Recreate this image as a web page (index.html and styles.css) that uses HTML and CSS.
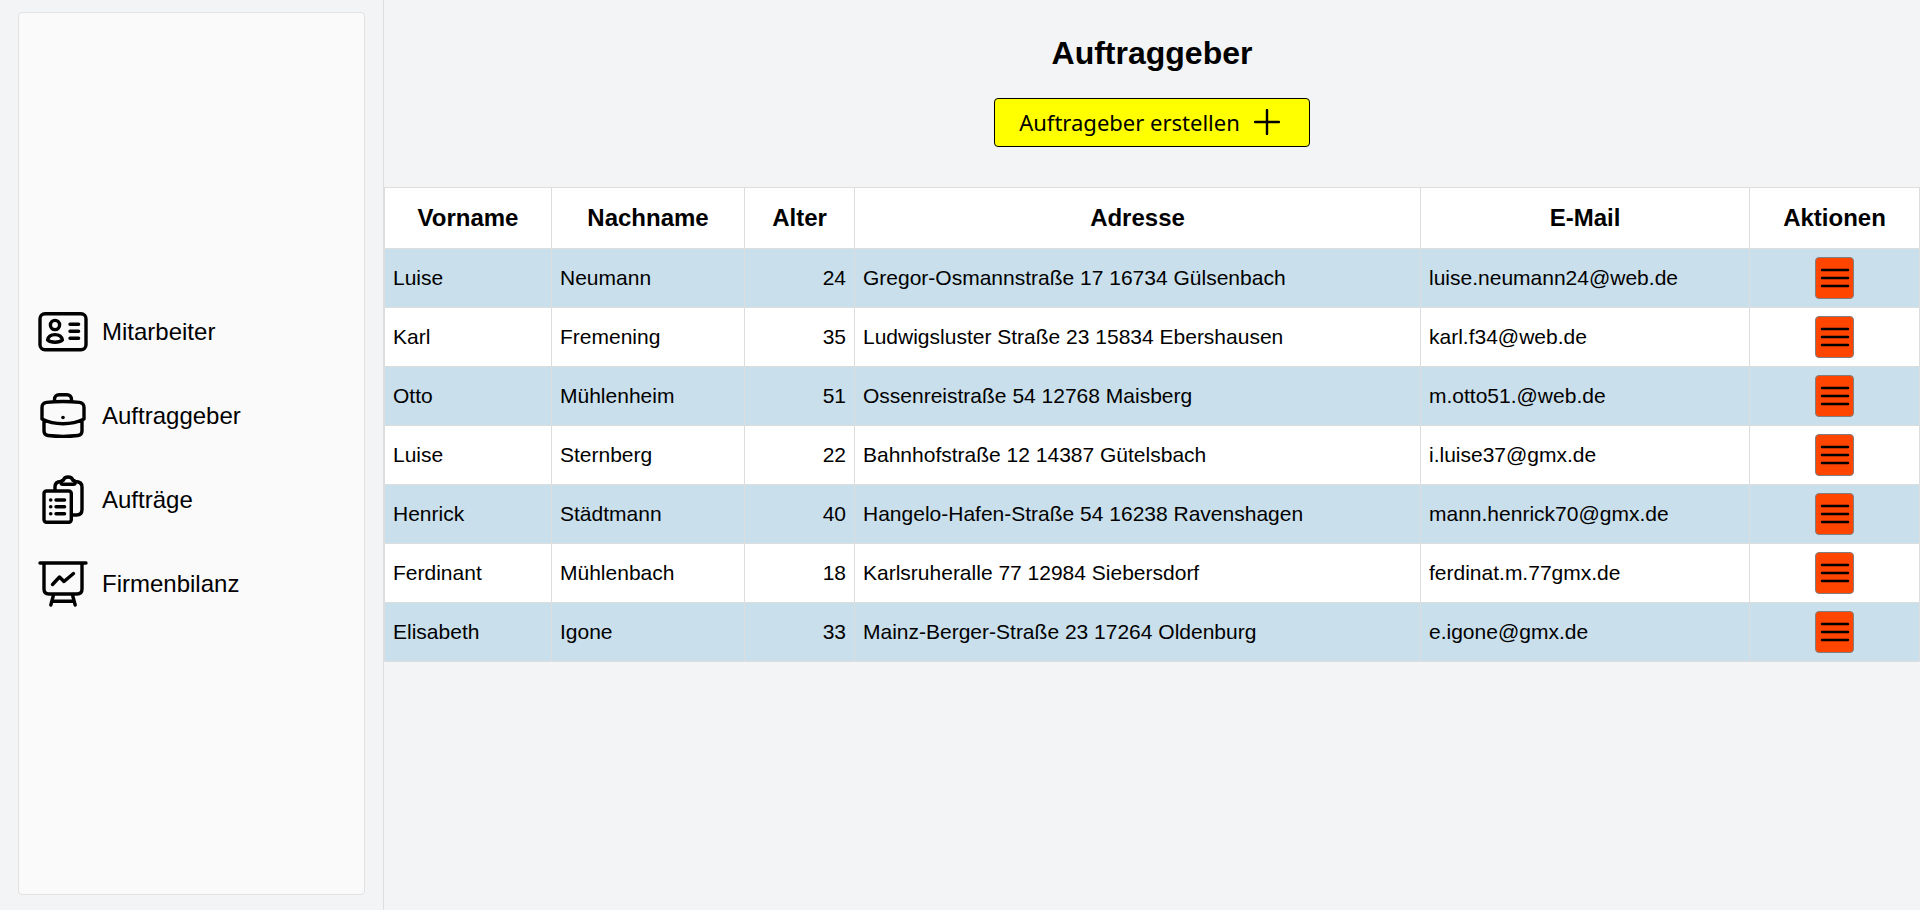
FILE: index.html
```html
<!DOCTYPE html>
<html lang="de">
<head>
<meta charset="utf-8">
<title>Auftraggeber</title>
<link rel="stylesheet" href="styles.css">
</head>
<body>
<svg width="0" height="0" class="sprite" aria-hidden="true">
  <symbol id="menu" viewBox="0 0 30 30"><path d="M2 7h26M2 15h26M2 23h26"/></symbol>
</svg>
<div class="layout">
  <aside class="sidebar">
    <nav class="panel">
      <a class="nav-link" href="#">
        <svg class="nav-icon" viewBox="0 0 50 50"><rect x="2" y="6.700" width="46" height="36" rx="5"/><circle cx="17" cy="18" r="4.600"/><path d="M9.600 33c.6-3.400 3.400-5.400 7.400-5.400s6.800 2 7.400 5.400c-1.700 1.500-4.300 2.200-7.400 2.200s-5.700-.7-7.400-2.200zM32 17.200h8.600M32 24.200h8.600M32 31.200h8.600"/></svg>
        <span>Mitarbeiter</span>
      </a>
      <a class="nav-link" href="#">
        <svg class="nav-icon" viewBox="0 0 50 50"><path d="M16.500 10.500V8.500c0-3 2-4.800 4.500-4.800h8c2.500 0 4.500 1.800 4.500 4.800v2M4 28V16.500c0-3 1.500-4.600 4.500-5.100 11-1.300 22-1.300 33 0 3 .5 4.500 2.100 4.500 5.100V28c-6 3-13 4.700-21 4.700S10 31 4 28zM6 29v11c0 2.800 1.300 4.200 4 4.500 10 1.100 20 1.100 30 0 2.700-.3 4-1.700 4-4.500V29"/><circle class="dot" cx="25" cy="26.500" r="1.800"/></svg>
        <span>Auftraggeber</span>
      </a>
      <a class="nav-link" href="#">
        <svg class="nav-icon" viewBox="0 0 50 50"><rect x="6" y="16" width="27.300" height="31.300" rx="2.500"/><path d="M17 15.500V12c0-3.500 2-5.500 6-5.500M37 6.500c5 0 7 2 7 5.500v22.500c0 3.500-2 5.500-5.500 5.500H34M25 9.200c-1.500 0-2-.8-2-1.800 0-1.200.8-1.900 2.200-2.100.8-2.200 2.400-3.300 4.900-3.300s4.100 1.100 4.900 3.300c1.400.2 2.200.9 2.200 2.100 0 1-.5 1.800-2 1.800zM18 25h8.600M18 31.700h8.600M18 38.700h8.600"/><circle class="dot" cx="12.700" cy="25" r="1.800"/><circle class="dot" cx="12.700" cy="31.700" r="1.800"/><circle class="dot" cx="12.700" cy="38.700" r="1.800"/></svg>
        <span>Aufträge</span>
      </a>
      <a class="nav-link" href="#">
        <svg class="nav-icon" viewBox="0 0 50 50"><path d="M2 4h46M6 4v26c0 3.500 1.800 5 5 5h28c3.200 0 5-1.500 5-5V4M15.500 36l-2.700 10M34.500 36l2.700 10M14.500 42.300h21"/><path d="M14.500 25.500l7-7.500 4.500 4.500 9.500-8"/></svg>
        <span>Firmenbilanz</span>
      </a>
    </nav>
  </aside>
  <main class="content">
    <h1 class="title">Auftraggeber</h1>
    <button class="create" type="button">Auftrageber erstellen
      <svg class="plus" viewBox="0 0 26 26"><path d="M13 1v24M1 13h24"/></svg>
    </button>
    <table class="clients">
      <colgroup><col class="c-first"><col class="c-last"><col class="c-age"><col class="c-address"><col class="c-mail"><col class="c-actions"></colgroup>
      <thead>
        <tr><th>Vorname</th><th>Nachname</th><th>Alter</th><th>Adresse</th><th>E-Mail</th><th>Aktionen</th></tr>
      </thead>
      <tbody>
        <tr><td>Luise</td><td>Neumann</td><td class="num">24</td><td>Gregor-Osmannstraße 17 16734 Gülsenbach</td><td>luise.neumann24@web.de</td><td class="act"><button class="menu" type="button" aria-label="Aktionen"><svg class="menu-icon"><use href="#menu"/></svg></button></td></tr>
        <tr><td>Karl</td><td>Fremening</td><td class="num">35</td><td>Ludwigsluster Straße 23 15834 Ebershausen</td><td>karl.f34@web.de</td><td class="act"><button class="menu" type="button" aria-label="Aktionen"><svg class="menu-icon"><use href="#menu"/></svg></button></td></tr>
        <tr><td>Otto</td><td>Mühlenheim</td><td class="num">51</td><td>Ossenreistraße 54 12768 Maisberg</td><td>m.otto51.@web.de</td><td class="act"><button class="menu" type="button" aria-label="Aktionen"><svg class="menu-icon"><use href="#menu"/></svg></button></td></tr>
        <tr><td>Luise</td><td>Sternberg</td><td class="num">22</td><td>Bahnhofstraße 12 14387 Gütelsbach</td><td>i.luise37@gmx.de</td><td class="act"><button class="menu" type="button" aria-label="Aktionen"><svg class="menu-icon"><use href="#menu"/></svg></button></td></tr>
        <tr><td>Henrick</td><td>Städtmann</td><td class="num">40</td><td>Hangelo-Hafen-Straße 54 16238 Ravenshagen</td><td>mann.henrick70@gmx.de</td><td class="act"><button class="menu" type="button" aria-label="Aktionen"><svg class="menu-icon"><use href="#menu"/></svg></button></td></tr>
        <tr><td>Ferdinant</td><td>Mühlenbach</td><td class="num">18</td><td>Karlsruheralle 77 12984 Siebersdorf</td><td>ferdinat.m.77gmx.de</td><td class="act"><button class="menu" type="button" aria-label="Aktionen"><svg class="menu-icon"><use href="#menu"/></svg></button></td></tr>
        <tr><td>Elisabeth</td><td>Igone</td><td class="num">33</td><td>Mainz-Berger-Straße 23 17264 Oldenburg</td><td>e.igone@gmx.de</td><td class="act"><button class="menu" type="button" aria-label="Aktionen"><svg class="menu-icon"><use href="#menu"/></svg></button></td></tr>
      </tbody>
    </table>
  </main>
</div>
</body>
</html>
```
FILE: styles.css
```css
* { box-sizing: border-box; }

body {
  margin: 0;
  background: #f3f4f6;
  color: #000;
  font-family: "Liberation Sans", Arial, sans-serif;
}

.sprite { display: none; }

.layout {
  display: grid;
  grid-template-columns: 1fr 4fr;
  min-height: 100vh;
}

.sidebar {
  display: flex;
  padding: 12px 18px 15px;
  border-right: 1px solid #dedede;
}

.panel {
  flex: 1;
  display: flex;
  flex-direction: column;
  justify-content: center;
  gap: 34px;
  padding: 8px 19px 0;
  background: #fafafa;
  border: 1px solid #e2e2e2;
  border-radius: 4px;
}

.nav-link {
  display: flex;
  align-items: center;
  gap: 14px;
  color: inherit;
  font-size: 24px;
  text-decoration: none;
}

.nav-icon {
  width: 50px;
  height: 50px;
  fill: none;
  stroke: #000;
  stroke-width: 3.4;
  stroke-linecap: round;
  stroke-linejoin: round;
}

.dot { fill: #000; stroke: none; }

.content {
  display: flex;
  flex-direction: column;
  align-items: center;
  min-width: 0;
}

.title {
  margin: 35px 0 26px;
  font-size: 32px;
  line-height: 37px;
}

.create {
  display: flex;
  align-items: center;
  gap: 14px;
  height: 49px;
  margin-bottom: 40px;
  padding: 0 29px 2px 24px;
  background: #ff0;
  border: 1px solid #000;
  border-radius: 4px;
  color: #000;
  font: 22px "Noto Sans", sans-serif;
}

.plus {
  width: 26px;
  height: 26px;
  fill: none;
  stroke: #000;
  stroke-width: 2.4;
  stroke-linecap: round;
}

.clients {
  width: 100%;
  table-layout: fixed;
  border-collapse: collapse;
  background: #fff;
  font-size: 21px;
}

.c-first { width: 167px; }
.c-last { width: 193px; }
.c-age { width: 110px; }
.c-mail { width: 329px; }
.c-actions { width: 170px; }

.clients th,
.clients td {
  border: 1px solid #ddd;
}

.clients th {
  height: 61px;
  padding: 0;
  font-size: 24px;
}

.clients td {
  height: 59px;
  padding: 0 8px;
}

.clients tbody tr:nth-child(odd) { background: #c9dfeb; }

.clients .num { text-align: right; }

.menu {
  display: flex;
  align-items: center;
  justify-content: center;
  width: 39px;
  height: 42px;
  margin: 0 auto;
  padding: 0;
  background: #ff4500;
  border: 1px solid #808080;
  border-radius: 4px;
}

.menu-icon {
  width: 30px;
  height: 30px;
  fill: none;
  stroke: #000;
  stroke-width: 2.4;
  stroke-linecap: round;
}
```
